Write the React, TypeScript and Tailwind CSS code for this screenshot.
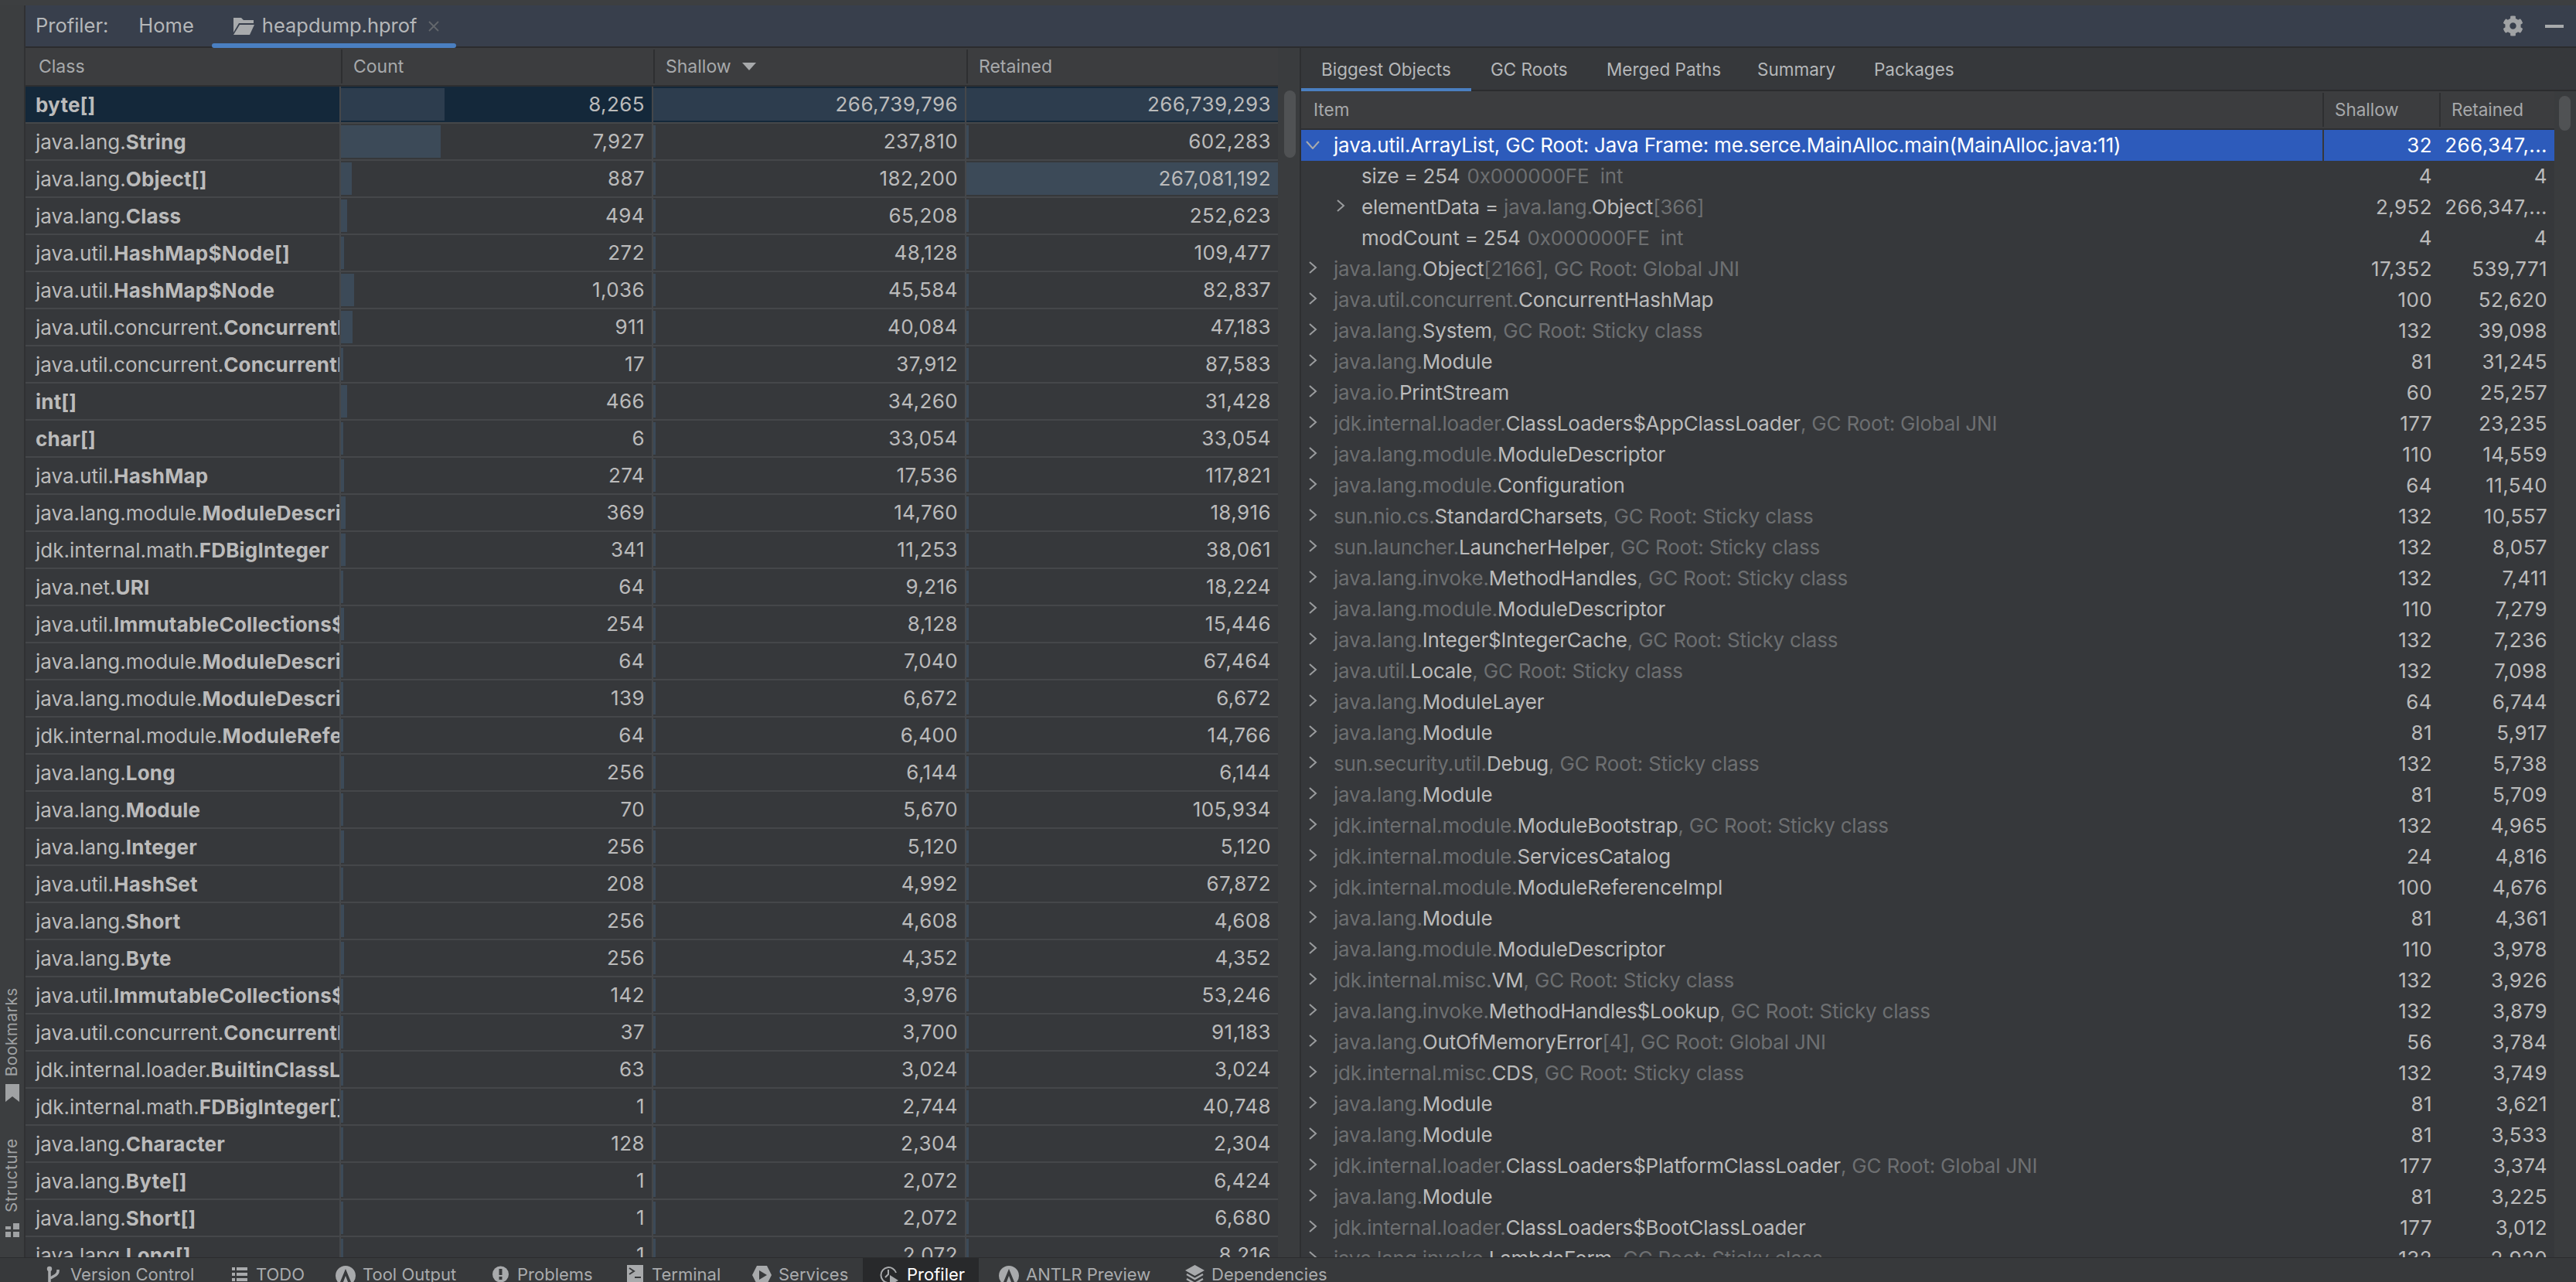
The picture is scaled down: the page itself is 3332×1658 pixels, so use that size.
import React from "react";
import { FaCog } from "react-icons/fa";

const font = "font-['Inter','Liberation_Sans',sans-serif]";

// [package, class, count, shallow, retained]
const classRows: [string, string, number, number, number][] = [
  ["", "byte[]", 8265, 266739796, 266739293],
  ["java.lang.", "String", 7927, 237810, 602283],
  ["java.lang.", "Object[]", 887, 182200, 267081192],
  ["java.lang.", "Class", 494, 65208, 252623],
  ["java.util.", "HashMap$Node[]", 272, 48128, 109477],
  ["java.util.", "HashMap$Node", 1036, 45584, 82837],
  ["java.util.concurrent.", "ConcurrentHashMap$Node", 911, 40084, 47183],
  ["java.util.concurrent.", "ConcurrentHashMap$Node[]", 17, 37912, 87583],
  ["", "int[]", 466, 34260, 31428],
  ["", "char[]", 6, 33054, 33054],
  ["java.util.", "HashMap", 274, 17536, 117821],
  ["java.lang.module.", "ModuleDescriptor$Exports", 369, 14760, 18916],
  ["jdk.internal.math.", "FDBigInteger", 341, 11253, 38061],
  ["java.net.", "URI", 64, 9216, 18224],
  ["java.util.", "ImmutableCollections$Set12", 254, 8128, 15446],
  ["java.lang.module.", "ModuleDescriptor", 64, 7040, 67464],
  ["java.lang.module.", "ModuleDescriptor$Requires", 139, 6672, 6672],
  ["jdk.internal.module.", "ModuleReferenceImpl", 64, 6400, 14766],
  ["java.lang.", "Long", 256, 6144, 6144],
  ["java.lang.", "Module", 70, 5670, 105934],
  ["java.lang.", "Integer", 256, 5120, 5120],
  ["java.util.", "HashSet", 208, 4992, 67872],
  ["java.lang.", "Short", 256, 4608, 4608],
  ["java.lang.", "Byte", 256, 4352, 4352],
  ["java.util.", "ImmutableCollections$SetN", 142, 3976, 53246],
  ["java.util.concurrent.", "ConcurrentHashMap$Segment", 37, 3700, 91183],
  ["jdk.internal.loader.", "BuiltinClassLoader", 63, 3024, 3024],
  ["jdk.internal.math.", "FDBigInteger[]", 1, 2744, 40748],
  ["java.lang.", "Character", 128, 2304, 2304],
  ["java.lang.", "Byte[]", 1, 2072, 6424],
  ["java.lang.", "Short[]", 1, 2072, 6680],
  ["java.lang.", "Long[]", 1, 2072, 8216],
];

const sticky = ", GC Root: Sticky class";
const jni = ", GC Root: Global JNI";

// [package, class, suffix, shallow, retained]
const treeRows: [string, string, string, string, string][] = [
  ["java.lang.", "Object", "[2166]" + jni, "17,352", "539,771"],
  ["java.util.concurrent.", "ConcurrentHashMap", "", "100", "52,620"],
  ["java.lang.", "System", sticky, "132", "39,098"],
  ["java.lang.", "Module", "", "81", "31,245"],
  ["java.io.", "PrintStream", "", "60", "25,257"],
  ["jdk.internal.loader.", "ClassLoaders$AppClassLoader", jni, "177", "23,235"],
  ["java.lang.module.", "ModuleDescriptor", "", "110", "14,559"],
  ["java.lang.module.", "Configuration", "", "64", "11,540"],
  ["sun.nio.cs.", "StandardCharsets", sticky, "132", "10,557"],
  ["sun.launcher.", "LauncherHelper", sticky, "132", "8,057"],
  ["java.lang.invoke.", "MethodHandles", sticky, "132", "7,411"],
  ["java.lang.module.", "ModuleDescriptor", "", "110", "7,279"],
  ["java.lang.", "Integer$IntegerCache", sticky, "132", "7,236"],
  ["java.util.", "Locale", sticky, "132", "7,098"],
  ["java.lang.", "ModuleLayer", "", "64", "6,744"],
  ["java.lang.", "Module", "", "81", "5,917"],
  ["sun.security.util.", "Debug", sticky, "132", "5,738"],
  ["java.lang.", "Module", "", "81", "5,709"],
  ["jdk.internal.module.", "ModuleBootstrap", sticky, "132", "4,965"],
  ["jdk.internal.module.", "ServicesCatalog", "", "24", "4,816"],
  ["jdk.internal.module.", "ModuleReferenceImpl", "", "100", "4,676"],
  ["java.lang.", "Module", "", "81", "4,361"],
  ["java.lang.module.", "ModuleDescriptor", "", "110", "3,978"],
  ["jdk.internal.misc.", "VM", sticky, "132", "3,926"],
  ["java.lang.invoke.", "MethodHandles$Lookup", sticky, "132", "3,879"],
  ["java.lang.", "OutOfMemoryError", "[4]" + jni, "56", "3,784"],
  ["jdk.internal.misc.", "CDS", sticky, "132", "3,749"],
  ["java.lang.", "Module", "", "81", "3,621"],
  ["java.lang.", "Module", "", "81", "3,533"],
  ["jdk.internal.loader.", "ClassLoaders$PlatformClassLoader", jni, "177", "3,374"],
  ["java.lang.", "Module", "", "81", "3,225"],
  ["jdk.internal.loader.", "ClassLoaders$BootClassLoader", "", "177", "3,012"],
  ["java.lang.invoke.", "LambdaForm", sticky, "132", "2,920"],
];

function BarCell({ value, scale, width, selected }: { value: number; scale: number; width: string; selected: boolean }) {
  const bar = Math.min(Math.max(value * scale, 0.7), 100);
  return (
    <div className={`relative h-[46px] border-l-2 border-[#45474a] ${width}`}>
      <div className={`absolute left-0 top-[2px] bottom-[2px] ${selected ? "bg-[#2d3d4e]" : "bg-[#3c4a58]"}`} style={{ width: `${bar}%` }} />
      <span className="absolute right-[9px] top-0 leading-[46px] tracking-[0.4px] text-[#bbbbbb]">{value.toLocaleString("en-US")}</span>
    </div>
  );
}

function ClassRow({ row, selected }: { row: (typeof classRows)[number]; selected: boolean }) {
  const [pkg, name, count, shallow, retained] = row;
  return (
    <div className={`flex h-[48px] border-b-2 border-[#45474a] ${selected ? "bg-[#14283a]" : ""}`}>
      <div className="w-[406px] h-[46px] pl-[13px] leading-[48px] overflow-hidden whitespace-nowrap text-[#bbbbbb]">
        {pkg}
        <span className="font-bold tracking-[0.2px]">{name}</span>
      </div>
      <BarCell value={count} scale={0.00404} width="w-[404px]" selected={selected} />
      <BarCell value={shallow} scale={0.0000004} width="w-[405px]" selected={selected} />
      <BarCell value={retained} scale={0.0000004} width="w-[405px]" selected={selected} />
    </div>
  );
}

function Chevron() {
  return (
    <svg className="ml-[9px] mr-[21px] shrink-0 -translate-y-[2px]" width="12" height="16" viewBox="0 0 12 16" fill="none">
      <path d="M2 1l8 7-8 7" stroke="#9a9c9e" strokeWidth="2" />
    </svg>
  );
}

function NumberCells({ shallow, retained }: { shallow: string; retained: string }) {
  return (
    <>
      <div className="w-[151px] pr-[9px] text-right tracking-[0.4px]">{shallow}</div>
      <div className="w-[149px] pr-[9px] text-right tracking-[0.4px]">{retained}</div>
    </>
  );
}

function TreeRow({ row }: { row: (typeof treeRows)[number] }) {
  const [pkg, name, suffix, shallow, retained] = row;
  return (
    <div className="flex h-[40px] leading-[40px] whitespace-nowrap text-[#bbbbbb]">
      <div className="flex-1 flex items-center tracking-[-0.2px]">
        <Chevron />
        <span className="text-[#6d6f71]">{pkg}</span>
        <span>{name}</span>
        <span className="text-[#6d6f71]">{suffix}</span>
      </div>
      <NumberCells shallow={shallow} retained={retained} />
    </div>
  );
}

function DetailRow({ label, value, dim, expand, shallow, retained }: { label: string; value: React.ReactNode; dim?: React.ReactNode; expand?: boolean; shallow: string; retained: string }) {
  return (
    <div className="flex h-[40px] leading-[40px] whitespace-nowrap text-[#bbbbbb]">
      <div className="flex-1 flex items-center pl-[78px] relative tracking-[-0.2px]">
        {expand && (
          <svg className="absolute left-[45px] top-[10px]" width="12" height="16" viewBox="0 0 12 16" fill="none">
            <path d="M2 1l8 7-8 7" stroke="#9a9c9e" strokeWidth="2" />
          </svg>
        )}
        <span>{label} = {value}</span>
        {dim}
      </div>
      <NumberCells shallow={shallow} retained={retained} />
    </div>
  );
}

function HeaderCell({ label, className }: { label: React.ReactNode; className: string }) {
  return (
    <div className={`flex items-center h-[44px] self-center text-[#a7a9ab] text-[23px] ${className}`}>{label}</div>
  );
}

function ToolItem({ icon, label, active, className }: { icon: React.ReactNode; label: string; active?: boolean; className: string }) {
  return (
    <div className={`flex shrink-0 h-[31px] ${active ? "bg-[#28292b] text-white" : "text-[#a9abad]"} ${className}`}>
      {icon}
      <span className="leading-[32px] mt-[5px] whitespace-nowrap">{label}</span>
    </div>
  );
}

const iconFill = "#a8aaac";
const barBg = "#37393b";

function AntlrIcon() {
  return (
    <svg className="shrink-0 mt-[10px]" width="26" height="26" viewBox="0 0 26 26">
      <circle cx="13" cy="13" r="13" fill={iconFill} />
      <path d="M13 4L6 21h4l3-8 3 8h4z" fill={barBg} />
    </svg>
  );
}

export default function App() {
  return (
    <div className={`${font} w-[3332px] h-[1658px] overflow-hidden bg-[#36383b] flex flex-col text-[26px]`}>
      <div className="h-[7px] bg-[#3d3f41] shrink-0" />
      <div className="flex flex-1 min-h-0">
        <div className="w-[33px] shrink-0 bg-[#3c3e40] border-r-2 border-[#303133] flex flex-col justify-end items-center pb-[26px] text-[#a0a2a4] text-[20.5px]">
          <span className="[writing-mode:vertical-rl] rotate-180 tracking-[0.7px]">Bookmarks</span>
          <svg className="mt-[10px] mb-[47px] shrink-0" width="18" height="23" viewBox="0 0 18 23">
            <path d="M0 0h18v23l-9-7-9 7z" fill="#a0a2a4" />
          </svg>
          <span className="[writing-mode:vertical-rl] rotate-180 tracking-[0.7px]">Structure</span>
          <svg className="mt-[14px] shrink-0" width="18" height="18" viewBox="0 0 18 18" fill="#a0a2a4">
            <rect x="0" y="11" width="7" height="7" />
            <rect x="10" y="11" width="8" height="7" />
            <rect x="10" y="0" width="8" height="8" />
            <rect x="0" y="4" width="7" height="4" />
          </svg>
        </div>
        <div className="flex-1 flex flex-col min-w-0">
          <div className="h-[55px] shrink-0 bg-[#383f4c] border-b-2 border-[#2b2c2e] flex items-center pl-[13px] pr-[16px] text-[#b5b7b9] text-[25.5px] relative">
            <span>Profiler:</span>
            <span className="ml-[39px]">Home</span>
            <svg className="ml-[50px] mr-[9px]" width="29" height="24" viewBox="0 0 29 24" fill="#a8aaac">
              <path d="M1 1h10l3 3h13v4H8L1 20z" />
              <path d="M9 10h19l-6 13H1z" />
            </svg>
            <span>heapdump.hprof</span>
            <svg className="ml-[13px]" width="16" height="16" viewBox="0 0 16 16" fill="none">
              <path d="M2 2l12 12M14 2L2 14" stroke="#63676c" strokeWidth="1.8" />
            </svg>
            <div className="absolute left-[241px] bottom-[-2px] w-[316px] h-[6px] rounded-full bg-[#4a7fc1]" />
            <FaCog className="ml-auto text-[#a0a2a4]" size={27} />
            <div className="ml-[28px] w-[24px] h-[4px] bg-[#a8aaac]" />
          </div>
          <div className="flex flex-1 min-h-0">
            <div className="w-[1620px] shrink-0 flex flex-col min-h-0 overflow-hidden">
              <div className="flex h-[50px] shrink-0 bg-[#3c3d3f] border-b-2 border-[#2e2f31] pl-[17px]">
                <HeaderCell label="Class" className="w-[391px]" />
                <HeaderCell label="Count" className="w-[404px] border-l-2 border-[#2e2f31] pl-[14px]" />
                <HeaderCell
                  label={
                    <>
                      Shallow
                      <svg className="ml-[14px]" width="18" height="10" viewBox="0 0 18 10">
                        <path d="M0 0h18l-9 10z" fill="#a7a9ab" />
                      </svg>
                    </>
                  }
                  className="w-[405px] border-l-2 border-[#2e2f31] pl-[14px]"
                />
                <HeaderCell label="Retained" className="w-[403px] border-l-2 border-[#2e2f31] pl-[14px]" />
              </div>
              {classRows.map((row, i) => (
                <ClassRow key={i} row={row} selected={i === 0} />
              ))}
            </div>
            <div className="w-[30px] shrink-0 bg-[#3a3c3e] border-r-2 border-[#2e2f31] pt-[55px] pl-[8px]">
              <div className="w-[15px] h-[87px] rounded-full bg-[#505254]" />
            </div>
            <div className="flex-1 flex flex-col min-w-0">
              <div className="h-[56px] shrink-0 pt-[2px] border-b-2 border-[#2b2c2e] flex items-center text-[#b5b7b9] text-[22.5px] relative">
                <div className="w-[245px] pl-[26px]">Biggest Objects</div>
                <div className="w-[150px]">GC Roots</div>
                <div className="w-[195px]">Merged Paths</div>
                <div className="w-[151px]">Summary</div>
                <div>Packages</div>
                <div className="absolute left-0 bottom-[-2px] w-[220px] h-[4px] bg-[#4a7fc1]" />
              </div>
              <div className="flex flex-1 min-h-0">
                <div className="flex-1 flex flex-col min-w-0 overflow-hidden">
                  <div className="flex h-[50px] shrink-0 bg-[#3c3d3f] border-b-2 border-[#2e2f31] text-[#a7a9ab] text-[22.5px] items-center">
                    <div className="flex-1 pl-[16px]">Item</div>
                    <div className="w-[151px] border-l-2 border-[#2e2f31] pl-[14px] h-[44px] leading-[44px]">Shallow</div>
                    <div className="w-[149px] border-l-2 border-[#2e2f31] pl-[14px] h-[44px] leading-[44px]">Retained</div>
                  </div>
                  <div className="flex h-[40px] leading-[40px] whitespace-nowrap bg-[#2d5bbb] text-white">
                    <div className="flex-1 flex items-center tracking-[-0.18px]">
                      <svg className="ml-[6px] mr-[18px] shrink-0 -translate-y-[1px]" width="18" height="11" viewBox="0 0 18 11" fill="none">
                        <path d="M1 1l8 9 8-9" stroke="#a8aaac" strokeWidth="2" />
                      </svg>
                      java.util.ArrayList, GC Root: Java Frame: me.serce.MainAlloc.main(MainAlloc.java:11)
                    </div>
                    <div className="w-[151px] border-l-2 border-[#36383b] pr-[9px] text-right tracking-[0.4px]">32</div>
                    <div className="w-[149px] pr-[9px] text-right tracking-[0.4px]">266,347,...</div>
                  </div>
                  <DetailRow label="size" value="254" dim={<span className="ml-[9px] text-[#6d6f71] whitespace-pre">0x000000FE  int</span>} shallow="4" retained="4" />
                  <DetailRow
                    label="elementData"
                    value={
                      <>
                        <span className="text-[#6d6f71]">java.lang.</span>Object<span className="text-[#6d6f71]">[366]</span>
                      </>
                    }
                    expand
                    shallow="2,952"
                    retained="266,347,..."
                  />
                  <DetailRow label="modCount" value="254" dim={<span className="ml-[9px] text-[#6d6f71] whitespace-pre">0x000000FE  int</span>} shallow="4" retained="4" />
                  {treeRows.map((row, i) => (
                    <TreeRow key={i} row={row} />
                  ))}
                </div>
                <div className="w-[28px] shrink-0 bg-[#3a3c3e] pt-[6px] pl-[6px]">
                  <div className="w-[15px] h-[45px] rounded-full bg-[#505254]" />
                </div>
              </div>
            </div>
          </div>
        </div>
      </div>
      <div className="h-[32px] shrink-0 bg-[#37393b] border-t border-[#2b2c2e] flex pl-[60px] text-[22px] overflow-hidden">
        <ToolItem
          className="w-[240px]"
          label="Version Control"
          icon={
            <svg className="shrink-0 mt-[10px] mr-[14px]" width="17" height="26" viewBox="0 0 17 26" fill="none" stroke={iconFill} strokeWidth="3.5">
              <circle cx="4" cy="4" r="2.2" fill={iconFill} strokeWidth="2" />
              <path d="M4 6v20" />
              <path d="M15 5v2c0 4-4 6-10 9" />
            </svg>
          }
        />
        <ToolItem
          className="w-[134px]"
          label="TODO"
          icon={
            <svg className="shrink-0 mt-[11px] mr-[11px]" width="20" height="20" viewBox="0 0 20 20" fill={iconFill}>
              <rect y="1" width="4" height="4" />
              <rect x="6" y="1" width="14" height="4" />
              <rect y="8" width="4" height="4" />
              <rect x="6" y="8" width="14" height="4" />
              <rect y="15" width="4" height="4" />
              <rect x="6" y="15" width="14" height="4" />
            </svg>
          }
        />
        <ToolItem className="w-[203px] gap-[9px]" label="Tool Output" icon={<AntlrIcon />} />
        <ToolItem
          className="w-[174px]"
          label="Problems"
          icon={
            <svg className="shrink-0 mt-[10px] mr-[11px]" width="21" height="22" viewBox="0 0 21 22">
              <circle cx="10.5" cy="11" r="10.5" fill={iconFill} />
              <rect x="8.5" y="4" width="4" height="8" fill={barBg} />
              <rect x="8.5" y="14" width="4" height="4" fill={barBg} />
            </svg>
          }
        />
        <ToolItem
          className="w-[162px]"
          label="Terminal"
          icon={
            <svg className="shrink-0 mt-[9px] mr-[11px]" width="21" height="22" viewBox="0 0 21 22">
              <rect width="21" height="22" fill={iconFill} />
              <path d="M3 4l6 4-6 4" fill="none" stroke={barBg} strokeWidth="2" />
              <rect x="10" y="15" width="8" height="2" fill={barBg} />
            </svg>
          }
        />
        <ToolItem
          className="w-[143px]"
          label="Services"
          icon={
            <svg className="shrink-0 mt-[10px] mr-[9px]" width="25" height="24" viewBox="0 0 25 24">
              <path d="M6 0h13l6 12-6 12H6L0 12z" fill={iconFill} />
              <path d="M9 6l10 6-10 6z" fill={barBg} />
            </svg>
          }
        />
        <ToolItem
          active
          className="w-[150px] pl-[22px]"
          label="Profiler"
          icon={
            <svg className="shrink-0 mt-[9px] mr-[10px]" width="25" height="26" viewBox="0 0 25 26" fill="none">
              <path d="M10 23A10 10 0 1 1 21 10" stroke={iconFill} strokeWidth="2" />
              <path d="M11 6v6l-4 4" stroke={iconFill} strokeWidth="2" />
              <path d="M13 13l11 7-11 6z" fill={iconFill} />
            </svg>
          }
        />
        <ToolItem className="w-[267px] pl-[26px] gap-[9px]" label="ANTLR Preview" icon={<AntlrIcon />} />
        <ToolItem
          className="gap-[9px]"
          label="Dependencies"
          icon={
            <svg className="shrink-0 mt-[9px]" width="25" height="27" viewBox="0 0 25 27" fill="none">
              <path d="M12.5 0L25 7l-12.5 7L0 7z" fill={iconFill} />
              <path d="M2 12l10.5 6L23 12" stroke={iconFill} strokeWidth="2.5" />
              <path d="M2 18l10.5 6L23 18" stroke={iconFill} strokeWidth="2.5" />
            </svg>
          }
        />
      </div>
    </div>
  );
}
